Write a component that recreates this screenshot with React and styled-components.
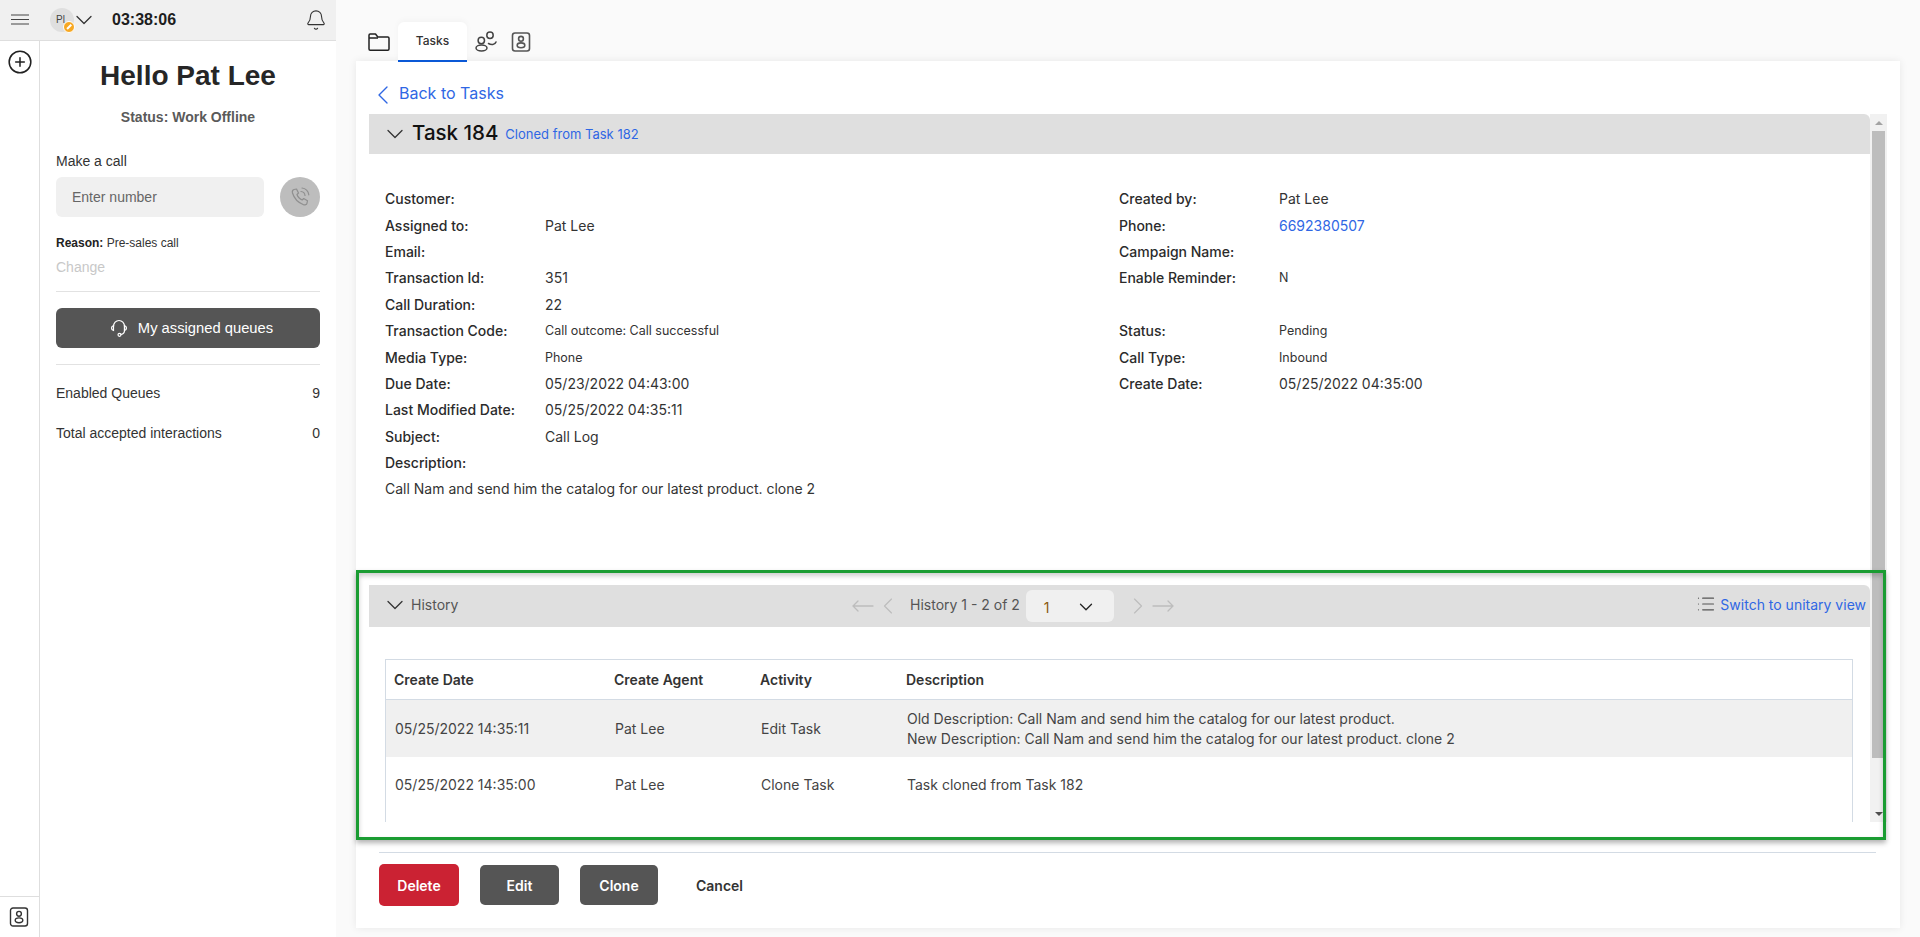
import React from "react";
import styled, { createGlobalStyle } from "styled-components";
import { ChevronDown, ChevronLeft, ChevronRight, List, Bell, CirclePlus } from "lucide-react";

const Global = createGlobalStyle`
  html, body { margin: 0; padding: 0; height: 937px; overflow: hidden; background: #fafafa; }
  * { box-sizing: border-box; }
  #root { height: 937px; }
`;

const Page = styled.div`
  display: flex; height: 937px; width: 1920px; position: relative;
  font-family: Inter, "Liberation Sans", sans-serif; color: #333;
`;

/* ---------- sidebar ---------- */
const Sidebar = styled.aside`
  width: 336px; flex: none; display: flex; flex-direction: column; background: #fff;
  font-family: "Liberation Sans", Arial, sans-serif;
`;
const TopBar = styled.header`
  height: 41px; flex: none; display: flex; align-items: center; background: #f0f0f0;
  border-bottom: 1px solid #dedede; padding: 0 9px 1px 11px;
`;
const Avatar = styled.div`
  position: relative; width: 24px; height: 24px; border-radius: 50%; background: #dfdfdf; margin-left: 21px;
  font-size: 10px; line-height: 24px; padding-left: 6px; color: #444;
`;
const StatusDot = styled.span`
  position: absolute; right: -1px; bottom: -1px; width: 12px; height: 12px; border-radius: 50%;
  background: #f7a823; border: 1px solid #fff; display: flex; align-items: center; justify-content: center;
  &::after { content: ""; width: 6px; height: 1.5px; background: #fff; transform: rotate(-45deg); }
`;
const Clock = styled.div`
  font: bold 16px "Liberation Sans", Arial, sans-serif; color: #1d1d1d; margin-left: 14px; flex: 1;
`;
const SideBody = styled.div`
  flex: 1; display: flex; min-height: 0;
`;
const Rail = styled.nav`
  width: 40px; flex: none; border-right: 1px solid #dedede; display: flex; flex-direction: column;
  align-items: center; padding: 8px 0 0; justify-content: space-between;
`;
const RailFoot = styled.div`
  width: 100%; height: 41px; border-top: 1px solid #dedede; display: flex; align-items: center; justify-content: center;
  margin-right: 1px;
`;
const SideContent = styled.div`
  flex: 1; padding: 0 16px; min-width: 0;
`;
const Hello = styled.h1`
  margin: 19px 0 0; text-align: center; font-size: 28px; line-height: 32px; font-weight: 700; color: #262626;
`;
const StatusLine = styled.div`
  margin-top: 17px; text-align: center; font-size: 14px; line-height: 16px; font-weight: 700; color: #5a5a5a;
`;
const FieldLabel = styled.div`
  margin-top: 28px; font-size: 14px; line-height: 16px; color: #333;
`;
const CallRow = styled.div`
  margin-top: 8px; display: flex; justify-content: space-between;
`;
const NumberInput = styled.div`
  width: 208px; height: 40px; border-radius: 6px; background: #f0f0f0; font-size: 14px; line-height: 40px;
  padding-left: 16px; color: #666;
`;
const CallButton = styled.div`
  width: 40px; height: 40px; border-radius: 50%; background: #bdbdbd; display: flex; align-items: center; justify-content: center;
`;
const Reason = styled.div`
  margin-top: 19px; font-size: 12px; line-height: 14px; color: #333;
  b { color: #222; }
`;
const Change = styled.div`
  margin-top: 9px; font-size: 14px; line-height: 16px; color: #c8c8c8;
`;
const Rule = styled.hr`
  margin: 16px 0; border: 0; border-top: 1px solid #e2e2e2;
`;
const QueueButton = styled.div`
  height: 40px; border-radius: 6px; background: #555; color: #fff; font-size: 14.75px;
  display: flex; align-items: center; justify-content: center; gap: 9px; padding-left: 6px;
`;
const Stat = styled.div`
  display: flex; justify-content: space-between; font-size: 14px; line-height: 16px; color: #333;
  margin-top: ${(p) => p.$top}px;
`;

/* ---------- main ---------- */
const Main = styled.main`
  flex: 1; min-width: 0; padding: 22px 20px 9px 20px; display: flex; flex-direction: column;
`;
const Tabs = styled.div`
  height: 39px; flex: none; display: flex; align-items: center; padding-left: 12px;
`;
const Tab = styled.div`
  width: 69px; height: 40px; margin: 1px 8px 0 8px; background: #fff; border-bottom: 2px solid #0a58d6; border-radius: 6px 6px 0 0;
  font-size: 12px; font-weight: 500; color: #333; display: flex; align-items: center; justify-content: center;
  box-shadow: 0 -2px 6px rgba(0,0,0,0.03); padding-bottom: 1px; position: relative; z-index: 1;
`;
const TabIcon = styled.div`
  display: flex; margin-right: ${(p) => p.$mr || 0}px;
`;
const Panel = styled.section`
  flex: 1; min-height: 0; background: #fff; box-shadow: 0 0 8px rgba(0,0,0,0.08); padding: 0 13px;
  display: flex; flex-direction: column;
`;
const BackLink = styled.div`
  height: 53px; flex: none; display: flex; align-items: center; color: #2f67e4; font-size: 16px;
  padding: 11px 0 0 0;
`;
const BackChevron = styled(ChevronLeft)`
  margin: 3px 0 0 -2px;
`;
const ScrollRow = styled.div`
  display: flex; height: 708px; flex: none;
`;
const Content = styled.div`
  width: 1501px; flex: none;
`;
const Bar = styled.div`
  background: #dfdfdf; display: flex; align-items: center;
`;
const TaskBar = styled(Bar)`
  height: 40px; padding-left: 12px; border-radius: 0 6px 0 0;
`;
const TaskTitle = styled.h2`
  margin: 0 7px 2px 3px; font-size: 20.5px; font-weight: 500; color: #111; line-height: 24px;
`;
const ClonedLink = styled.span`
  font-size: 13px; color: #2f67e4;
`;
const Details = styled.div`
  display: grid; grid-template-columns: 734px 1fr; padding: 31.5px 0 0 16px; height: 417px;
`;
const DetailColumn = styled.div`
  display: flex; flex-direction: column;
`;
const DetailRow = styled.div`
  display: flex; height: 26.4px; align-items: center; font-size: 14px; color: #333;
`;
const DetailLabel = styled.span`
  width: 160px; flex: none; font-weight: 500; font-size: 14px; color: #2b2b2b;
`;
const DetailValue = styled.span`
  font-size: ${(p) => (p.$small ? 12.5 : 14)}px; color: ${(p) => (p.$link ? "#2f67e4" : "#333")};
`;
const HistoryBar = styled(Bar)`
  height: 42px; border-radius: 0 6px 0 0; display: grid; grid-template-columns: 483px auto 1fr; font-size: 14px; color: #555;
  margin-top: 14px;
`;
const HistoryTitle = styled.div`
  display: flex; align-items: center; gap: 2px; padding: 0 0 3px 12px; color: #555;
`;
const Pager = styled.div`
  display: flex; align-items: center; color: #555;
`;
const PagerCount = styled.span`
  margin: 0 6px 0 8px; padding-bottom: 3px;
`;
const PageSelect = styled.div`
  width: 88px; height: 32px; border-radius: 6px; background: #f0f0f0; display: flex; align-items: center;
  justify-content: space-between; padding: 2px 17px 0 18px; color: #8a5a10; margin-right: 10px;
`;
const SwitchView = styled.div`
  display: flex; align-items: center; justify-content: flex-end; gap: 4px; color: #2f67e4; padding: 0 4px 4px 0;
`;
const Table = styled.div`
  margin: 32px 0 0 16px; width: 1468px; height: 163px; border: 1px solid #d3dbe4; border-bottom: 0; overflow: hidden;
`;
const TRow = styled.div`
  display: grid; grid-template-columns: 220px 146px 146px 1fr; align-items: center; padding-left: 8px;
  height: ${(p) => p.$h}px; background: ${(p) => (p.$alt ? "#f0f0f0" : "#fff")}; font-size: 14px; color: #444;
`;
const THead = styled(TRow)`
  font-weight: 600; color: #333; border-bottom: 1px solid #d3dbe4; font-size: 14px;
`;
const TCell = styled.div`
  padding-left: ${(p) => (p.$head ? 0 : 1)}px; line-height: 20px;
`;
const ScrollTrack = styled.div`
  width: 17px; flex: none; background: #f1f1f1; display: flex; flex-direction: column; align-items: center;
  height: 708px;
`;
const ScrollBtn = styled.div`
  height: 17px; flex: none; width: 100%; display: flex; align-items: center; justify-content: center;
  &::after {
    content: ""; border-left: 4px solid transparent; border-right: 4px solid transparent;
    ${(p) => (p.$down ? "border-top: 4px solid #505050;" : "border-bottom: 4px solid #a3a3a3;")}
  }
`;
const ScrollThumb = styled.div`
  width: 13px; height: 627px; background: #bdbdbd; flex: none;
`;
const Spacer = styled.div` flex: 1; `;
const Footer = styled.div`
  margin: 30px 11px 0 10px; border-top: 1px solid #d3dbe4; padding-top: 11px; display: flex; align-items: center; gap: 21px;
`;
const ActionButton = styled.div`
  width: ${(p) => p.$w}px; height: ${(p) => (p.$danger ? 42 : 40)}px; border-radius: 5px;
  background: ${(p) => (p.$danger ? "#cb2233" : "#555")}; color: #fff; font-size: 14px; font-weight: 600;
  display: flex; align-items: center; justify-content: center;
`;
const CancelButton = styled.div`
  font-size: 14px; font-weight: 600; color: #333; margin-left: 17px;
`;
const Highlight = styled.div`
  position: absolute; left: 356px; top: 570px; width: 1530px; height: 270px; border: 3px solid #1a9c32;
  box-shadow: 0 3px 5px rgba(0,0,0,0.3), inset 0 3px 5px rgba(0,0,0,0.2); pointer-events: none;
`;

/* ---------- drawn icons ---------- */
const Hamburger = () => (
  <svg width="18" height="12" viewBox="0 0 18 12" stroke="#444" strokeWidth="1.2">
    <path d="M0 1h18M0 5.5h18M0 10h18" />
  </svg>
);
const ContactBook = ({ size = 20, color = "#444", sw = 1.6 }) => (
  <svg width={size} height={size} viewBox="0 0 20 20" fill="none" stroke={color} strokeWidth={sw}>
    <rect x="1.5" y="1" width="17" height="18" rx="2.5" />
    <circle cx="10" cy="6.8" r="2.4" />
    <ellipse cx="10" cy="13.3" rx="3.8" ry="2.4" />
  </svg>
);
const Folder = () => (
  <svg width="22" height="20" viewBox="0 0 22 20" fill="none" stroke="#222" strokeWidth="1.5" strokeLinejoin="round">
    <path d="M1 17V3.2C1 2.5 1.5 2 2.2 2h5.3l2.3 3h10c.7 0 1.2.5 1.2 1.2V17c0 .7-.5 1.2-1.2 1.2H2.2C1.5 18.2 1 17.7 1 17z" />
    <path d="M1 6h9" />
  </svg>
);
const People = () => (
  <svg width="22" height="21" viewBox="0 0 22 21" fill="none" stroke="#444" strokeWidth="1.5" strokeLinecap="round">
    <circle cx="6.3" cy="9.5" r="3.2" />
    <ellipse cx="6.5" cy="17" rx="5.5" ry="3" />
    <circle cx="15" cy="4.3" r="3.2" />
    <path d="M13.5 12.5c2.5 1.5 6.5 1.5 7.5-1.5" />
  </svg>
);
const PhoneWaves = () => (
  <svg width="22" height="22" viewBox="0 0 22 22" fill="none" stroke="#8f8f8f" strokeWidth="1.2" strokeLinecap="round" strokeLinejoin="round">
    <path d="M5 3.5 7.5 3l2 4-1.5 1.500c.5 2 3 4.800 5.200 5.500l1.500-1.500 3.800 2.200-.5 2.500c-.5 1.500-2 2-3.500 1.500C9 16.500 5 12 3.500 7c-.4-1.500 0-3 1.500-3.500z" />
    <path d="M12 5.5c2 .2 3.8 2 4 4M13 2c3.500.3 6.500 3.300 6.800 6.800" />
  </svg>
);
const Headset = () => (
  <svg width="20" height="20" viewBox="0 0 20 20" fill="none" stroke="#fff" strokeWidth="1.2" strokeLinecap="round">
    <path d="M4.5 8.5C4.5 5 7 2.5 10 2.5s5.500 2.500 5.500 6v4c0 2-1.500 3.500-3.500 4" />
    <path d="M4.5 7.5C3 8 2.5 9 2.5 10s.5 2 2 2.500zM15.500 7.500c1.500.5 2 1.500 2 2.500s-.5 2-2 2.500z" />
    <circle cx="10.5" cy="16.8" r="1.5" />
  </svg>
);
const LongArrow = ({ right }) => (
  <svg width="22" height="14" viewBox="0 0 22 14" fill="none" stroke="#bdbdbd" strokeWidth="1.3" strokeLinecap="round">
    {right ? <path d="M1 7h20M16 2l5 5-5 5" /> : <path d="M21 7H1M6 2 1 7l5 5" />}
  </svg>
);

const leftDetails = [
  ["Customer:", ""],
  ["Assigned to:", "Pat Lee"],
  ["Email:", ""],
  ["Transaction Id:", "351"],
  ["Call Duration:", "22"],
  ["Transaction Code:", "Call outcome: Call successful", true],
  ["Media Type:", "Phone", true],
  ["Due Date:", "05/23/2022 04:43:00"],
  ["Last Modified Date:", "05/25/2022 04:35:11"],
  ["Subject:", "Call Log"],
  ["Description:", ""],
];
const rightDetails = [
  ["Created by:", "Pat Lee"],
  ["Phone:", "6692380507", false, true],
  ["Campaign Name:", ""],
  ["Enable Reminder:", "N", true],
  ["", ""],
  ["Status:", "Pending", true],
  ["Call Type:", "Inbound", true],
  ["Create Date:", "05/25/2022 04:35:00"],
];

export default function App() {
  return (
    <Page>
      <Global />
      <Sidebar>
        <TopBar>
          <Hamburger />
          <Avatar>Pl<StatusDot /></Avatar>
          <ChevronDown size={28} color="#333" strokeWidth={1.1} style={{ marginLeft: -4 }} />
          <Clock>03:38:06</Clock>
          <Bell size={22} color="#333" strokeWidth={1.2} />
        </TopBar>
        <SideBody>
          <Rail>
            <CirclePlus size={26} color="#222" strokeWidth={1.4} />
            <RailFoot><ContactBook size={20} color="#333" sw={1.4} /></RailFoot>
          </Rail>
          <SideContent>
            <Hello>Hello Pat Lee</Hello>
            <StatusLine>Status: Work Offline</StatusLine>
            <FieldLabel>Make a call</FieldLabel>
            <CallRow>
              <NumberInput>Enter number</NumberInput>
              <CallButton><PhoneWaves /></CallButton>
            </CallRow>
            <Reason><b>Reason:</b> Pre-sales call</Reason>
            <Change>Change</Change>
            <Rule />
            <QueueButton><Headset />My assigned queues</QueueButton>
            <Rule />
            <Stat $top={20}><span>Enabled Queues</span><span>9</span></Stat>
            <Stat $top={24}><span>Total accepted interactions</span><span>0</span></Stat>
          </SideContent>
        </SideBody>
      </Sidebar>
      <Main>
        <Tabs>
          <TabIcon><Folder /></TabIcon>
          <Tab>Tasks</Tab>
          <TabIcon $mr={14}><People /></TabIcon>
          <TabIcon><ContactBook size={20} color="#555" /></TabIcon>
        </Tabs>
        <Panel>
          <BackLink><BackChevron size={32} strokeWidth={1} />Back to Tasks</BackLink>
          <ScrollRow>
            <Content>
              <TaskBar>
                <ChevronDown size={28} color="#333" strokeWidth={1.1} />
                <TaskTitle>Task 184</TaskTitle>
                <ClonedLink>Cloned from Task 182</ClonedLink>
              </TaskBar>
              <Details>
                <DetailColumn>
                  {leftDetails.map(([l, v, small]) => (
                    <DetailRow key={l}><DetailLabel>{l}</DetailLabel><DetailValue $small={small}>{v}</DetailValue></DetailRow>
                  ))}
                  <DetailRow>Call Nam and send him the catalog for our latest product. clone 2</DetailRow>
                </DetailColumn>
                <DetailColumn>
                  {rightDetails.map(([l, v, small, link], i) => (
                    <DetailRow key={i}><DetailLabel>{l}</DetailLabel><DetailValue $small={small} $link={link}>{v}</DetailValue></DetailRow>
                  ))}
                </DetailColumn>
              </Details>
              <HistoryBar>
                <HistoryTitle><ChevronDown size={28} color="#333" strokeWidth={1.1} />History</HistoryTitle>
                <Pager>
                  <LongArrow />
                  <ChevronLeft size={28} color="#bdbdbd" strokeWidth={1} />
                  <PagerCount>History 1 - 2 of 2</PagerCount>
                  <PageSelect>1<ChevronDown size={22} color="#222" strokeWidth={1.4} /></PageSelect>
                  <ChevronRight size={28} color="#bdbdbd" strokeWidth={1} />
                  <LongArrow right />
                </Pager>
                <SwitchView><List size={20} color="#555" strokeWidth={1.4} />Switch to unitary view</SwitchView>
              </HistoryBar>
              <Table>
                <THead $h={40}>
                  <TCell $head>Create Date</TCell><TCell $head>Create Agent</TCell><TCell $head>Activity</TCell><TCell $head>Description</TCell>
                </THead>
                <TRow $h={57} $alt>
                  <TCell>05/25/2022 14:35:11</TCell><TCell>Pat Lee</TCell><TCell>Edit Task</TCell>
                  <TCell>Old Description: Call Nam and send him the catalog for our latest product.<br />New Description: Call Nam and send him the catalog for our latest product. clone 2</TCell>
                </TRow>
                <TRow $h={56}>
                  <TCell>05/25/2022 14:35:00</TCell><TCell>Pat Lee</TCell><TCell>Clone Task</TCell><TCell>Task cloned from Task 182</TCell>
                </TRow>
              </Table>
            </Content>
            <ScrollTrack>
              <ScrollBtn />
              <ScrollThumb />
              <Spacer />
              <ScrollBtn $down />
            </ScrollTrack>
          </ScrollRow>
          <Footer>
            <ActionButton $danger $w={80}>Delete</ActionButton>
            <ActionButton $w={79}>Edit</ActionButton>
            <ActionButton $w={78}>Clone</ActionButton>
            <CancelButton>Cancel</CancelButton>
          </Footer>
        </Panel>
      </Main>
      <Highlight />
    </Page>
  );
}
